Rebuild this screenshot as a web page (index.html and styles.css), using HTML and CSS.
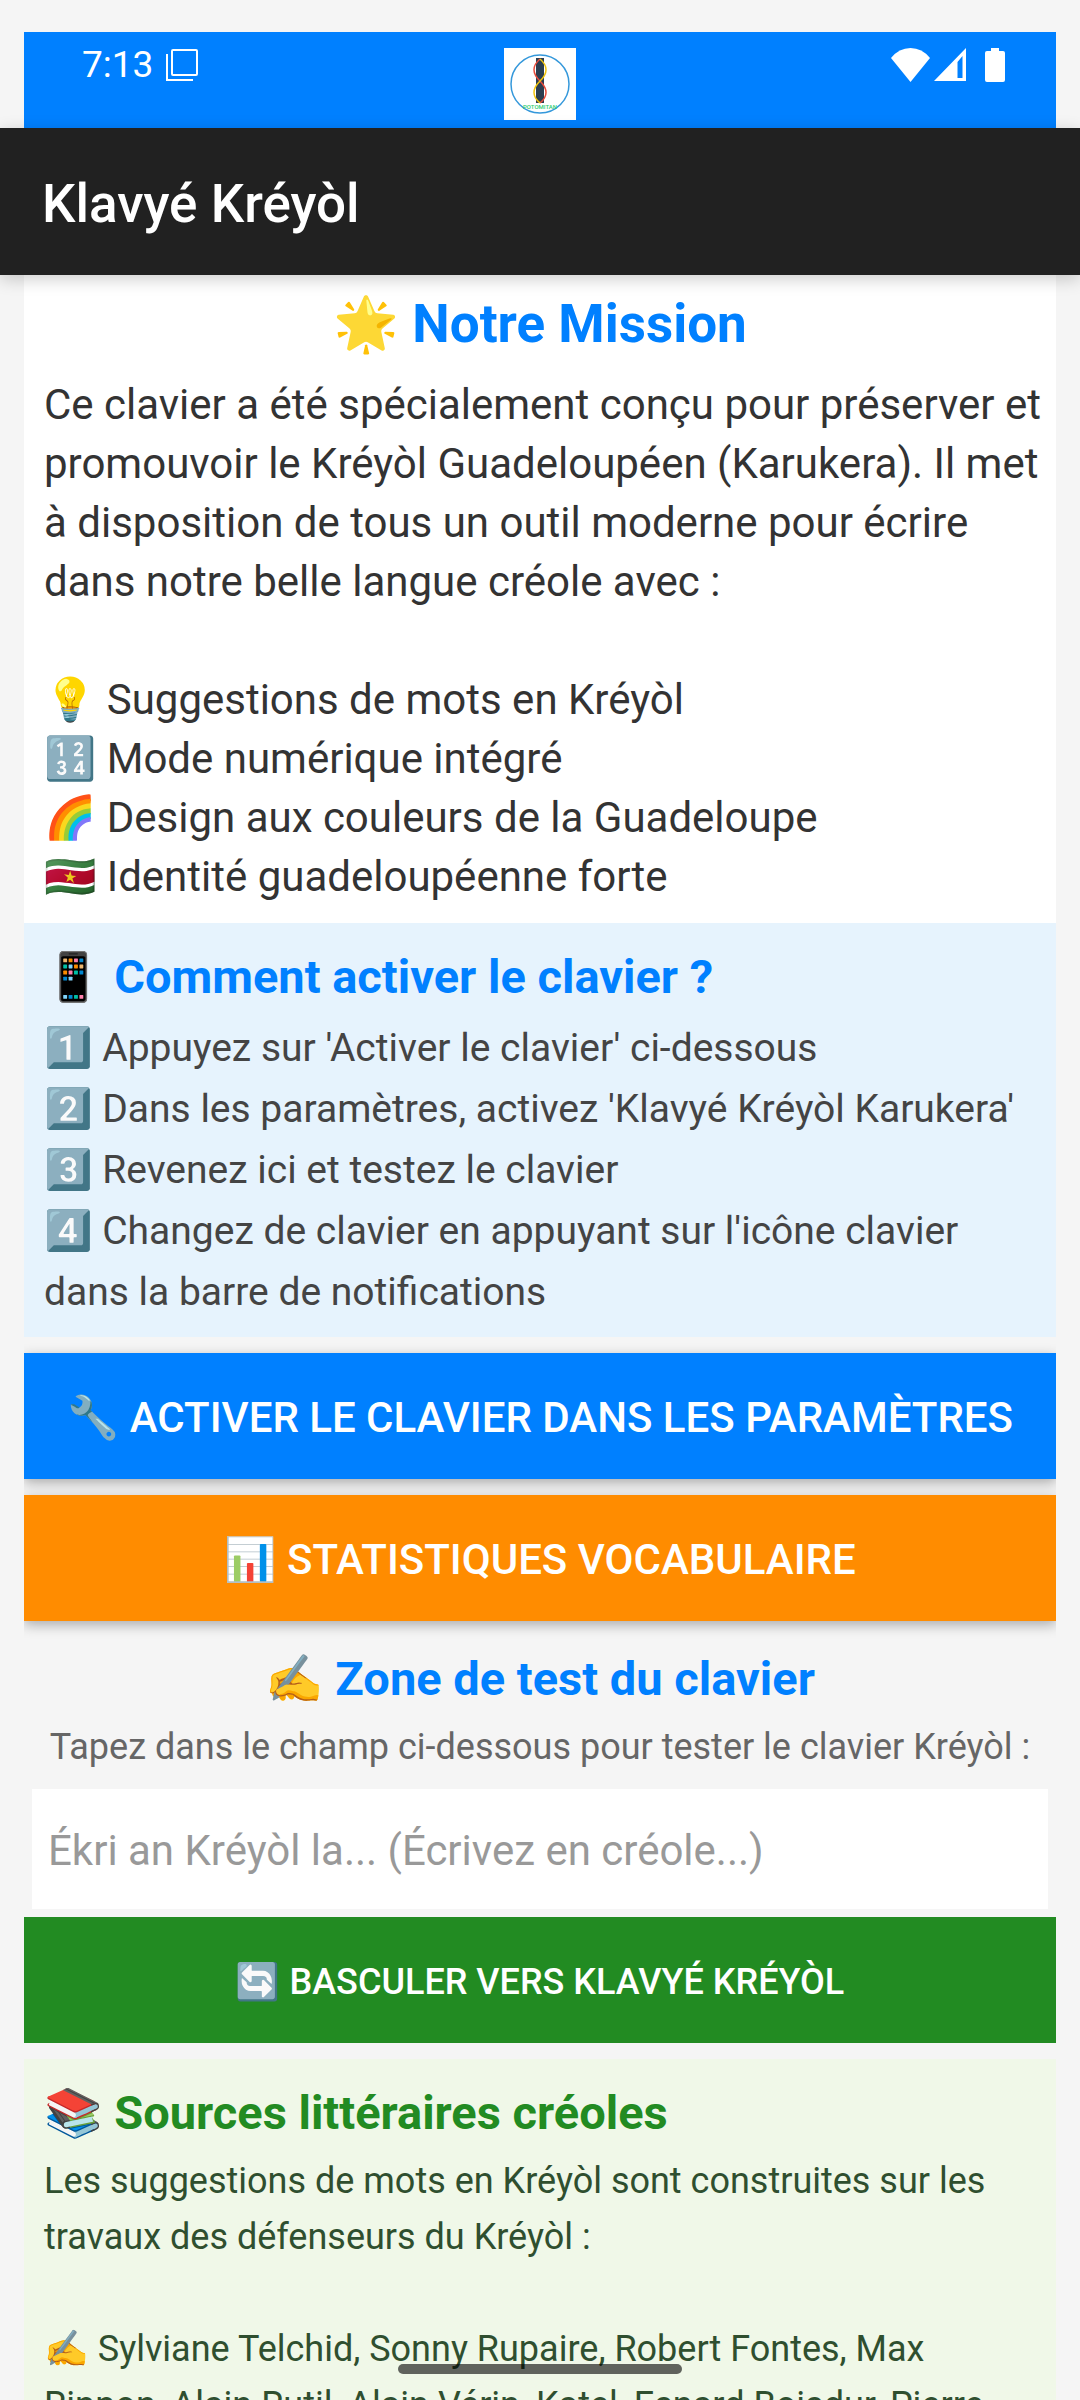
FILE: index.html
```html
<!DOCTYPE html>
<html lang="fr">
<head>
<meta charset="utf-8">
<meta name="viewport" content="width=device-width, initial-scale=1">
<title>Klavyé Kréyòl</title>
<link rel="stylesheet" href="styles.css">
</head>
<body>
<div class="screen">
  <div class="banner">
    <div class="status">
      <span>7:13</span>
      <svg class="cast" viewBox="0 0 32 32" fill="none" stroke="#fff" stroke-width="2"><rect x="6" y="1" width="25" height="25" rx="1"/><path d="M1 5v26h26"/></svg>
    </div>
    <svg class="logo" viewBox="0 0 72 72" role="img" aria-label="Potomitan">
      <rect width="72" height="72" fill="#fff"/>
      <rect x="32" y="10" width="8" height="45" fill="#2c3e50"/>
      <g fill="none" stroke-width="1.5">
        <path d="M36 11C28 18 28 25 36 33S44 48 36 55" stroke="#e74c3c"/>
        <path d="M36 11C44 18 44 25 36 33S28 48 36 55" stroke="#f1c40f"/>
        <circle cx="36" cy="36" r="29" stroke="#3498db"/>
      </g>
      <text class="logo-text" x="36" y="61" text-anchor="middle">POTOMITAN</text>
    </svg>
    <div class="signals">
      <svg class="wifi" viewBox="0 0 39 34" fill="#fff"><path d="M19.500 34L0 10Q8 0 19.500 0T39 10Z"/></svg>
      <svg class="cell" viewBox="0 0 32 34" fill="#fff"><path fill-rule="evenodd" d="M32 0V33H0ZM28.500 8L23.500 14V30H28.500Z"/></svg>
      <svg class="battery" viewBox="0 0 20 34" fill="#fff"><path d="M6 0h8v3h4q2 0 2 2v27q0 2-2 2H2q-2 0-2-2V5q0-2 2-2h4z"/></svg>
    </div>
  </div>
  <header class="appbar"><h1>Klavyé Kréyòl</h1></header>
  <main class="content">
    <section class="card mission">
      <h2 class="title-large">🌟 Notre Mission</h2>
      <p class="body">Ce clavier a été spécialement conçu pour préserver et promouvoir le Kréyòl Guadeloupéen (Karukera). Il met à disposition de tous un outil moderne pour écrire dans notre belle langue créole avec :</p>
      <ul class="body features">
        <li>💡 Suggestions de mots en Kréyòl</li>
        <li>🔢 Mode numérique intégré</li>
        <li>🌈 Design aux couleurs de la Guadeloupe</li>
        <li>🇸🇷 Identité guadeloupéenne forte</li>
      </ul>
    </section>
    <section class="card guide">
      <h2 class="title">📱 Comment activer le clavier ?</h2>
      <ol class="steps">
        <li>1️⃣ Appuyez sur 'Activer le clavier' ci-dessous</li>
        <li>2️⃣ Dans les paramètres, activez 'Klavyé Kréyòl Karukera'</li>
        <li>3️⃣ Revenez ici et testez le clavier</li>
        <li>4️⃣ Changez de clavier en appuyant sur l'icône clavier dans la barre de notifications</li>
      </ol>
    </section>
    <button class="btn btn-blue" type="button">🔧 ACTIVER LE CLAVIER DANS LES PARAMÈTRES</button>
    <button class="btn btn-orange" type="button">📊 STATISTIQUES VOCABULAIRE</button>
    <section class="test">
      <h2 class="title">✍️ Zone de test du clavier</h2>
      <label class="hint" for="essai">Tapez dans le champ ci-dessous pour tester le clavier Kréyòl :</label>
      <input class="field" id="essai" type="text" placeholder="Ékri an Kréyòl la... (Écrivez en créole...)">
      <button class="btn btn-green" type="button">🔄 BASCULER VERS KLAVYÉ KRÉYÒL</button>
    </section>
    <section class="card sources">
      <h2 class="title">📚 Sources littéraires créoles</h2>
      <p>Les suggestions de mots en Kréyòl sont construites sur les travaux des défenseurs du Kréyòl :</p>
      <p>✍️ Sylviane Telchid, Sonny Rupaire, Robert Fontes, Max Rippon, Alain Rutil, Alain Vérin, Katel, Esnard Boisdur, Pierre</p>
    </section>
  </main>
  <div class="home-bar"></div>
</div>
</body>
</html>
```
FILE: styles.css
```css
* { box-sizing: border-box; margin: 0; padding: 0; }
body {
  background: #f5f5f5;
  font-family: Roboto, "Noto Color Emoji", sans-serif;
  color: #333;
}
.screen {
  position: relative;
  height: 100vh;
  overflow: hidden;
  padding-top: 32px;
}
.banner {
  height: 96px;
  margin: 0 24px;
  padding: 16px 51px 0;
  background: #0080ff;
  color: #fff;
  display: grid;
  grid-template-columns: 1fr 72px 1fr;
  align-items: start;
}
.status { display: flex; align-items: center; gap: 13px; padding-left: 7px; font-size: 37px; line-height: 34px; }
.cast { width: 32px; height: 32px; }
.logo { width: 72px; height: 72px; }
.logo-text { font-size: 6px; font-weight: 500; fill: #2ecc71; }
.signals { display: flex; justify-content: flex-end; }
.wifi { width: 39px; height: 34px; margin-right: 4px; }
.cell { width: 32px; height: 34px; margin-right: 19px; }
.battery { width: 20px; height: 34px; }
.appbar {
  position: relative;
  z-index: 1;
  padding: 45px 42px 40px;
  background: #212121;
  color: #fff;
  box-shadow: 0 4px 16px rgba(0, 0, 0, .2);
}
.appbar h1 { font-size: 53px; font-weight: 500; line-height: 62px; }
.content {
  margin: 0 24px;
  overflow: hidden;
  display: flex;
  flex-direction: column;
}
.card { padding: 26px 20px 13px; }
.title-large { font-size: 53px; line-height: 62px; margin-bottom: 20px; color: #0080ff; text-align: center; }
.title { font-size: 47px; line-height: 55px; color: #0080ff; }
.mission { padding: 18px 8px 17px; background: #fff; }
.body { padding-left: 12px; font-size: 42px; line-height: 59px; }
.features { margin-top: 59px; list-style: none; }
.guide { background: #e6f3fd; color: #444; margin-bottom: 16px; }
.steps { margin-top: 14px; padding-bottom: 1px; list-style: none; font-size: 39px; line-height: 61px; }
.btn {
  width: 100%;
  height: 126px;
  padding-top: 3px;
  border: 0;
  color: #fff;
  font: 500 42px/50px Roboto, "Noto Color Emoji", sans-serif;
  white-space: nowrap;
}
.btn-blue { background: #0080ff; margin-bottom: 16px; box-shadow: 0 4px 12px rgba(0, 0, 0, .3); }
.btn-orange { position: relative; background: #ff8c00; box-shadow: 0 4px 12px rgba(0, 0, 0, .3); }
.btn-green { background: #228b22; font-size: 36px; }
.test { padding: 30px 0 16px; text-align: center; }
.hint { display: block; margin: 20px 0; font-size: 36px; line-height: 43px; color: #666; white-space: nowrap; }
.field {
  display: block;
  width: calc(100% - 16px);
  height: 120px;
  margin: 0 8px 8px;
  padding: 3px 16px 0;
  border: 0;
  background: #fff;
  font: 42px Roboto, sans-serif;
}
.field::placeholder { color: #999; opacity: 1; }
.sources { background: #f0f8e8; color: #2f4f2f; font-size: 36px; line-height: 56px; }
.sources .title { color: #228b22; margin-bottom: 13px; }
.sources p + p { margin-top: 56px; }
.home-bar {
  position: absolute;
  z-index: 2;
  left: 50%;
  bottom: 26px;
  width: 284px;
  height: 10px;
  margin-left: -142px;
  border-radius: 5px;
  background: rgba(0, 0, 0, .6);
}
```
